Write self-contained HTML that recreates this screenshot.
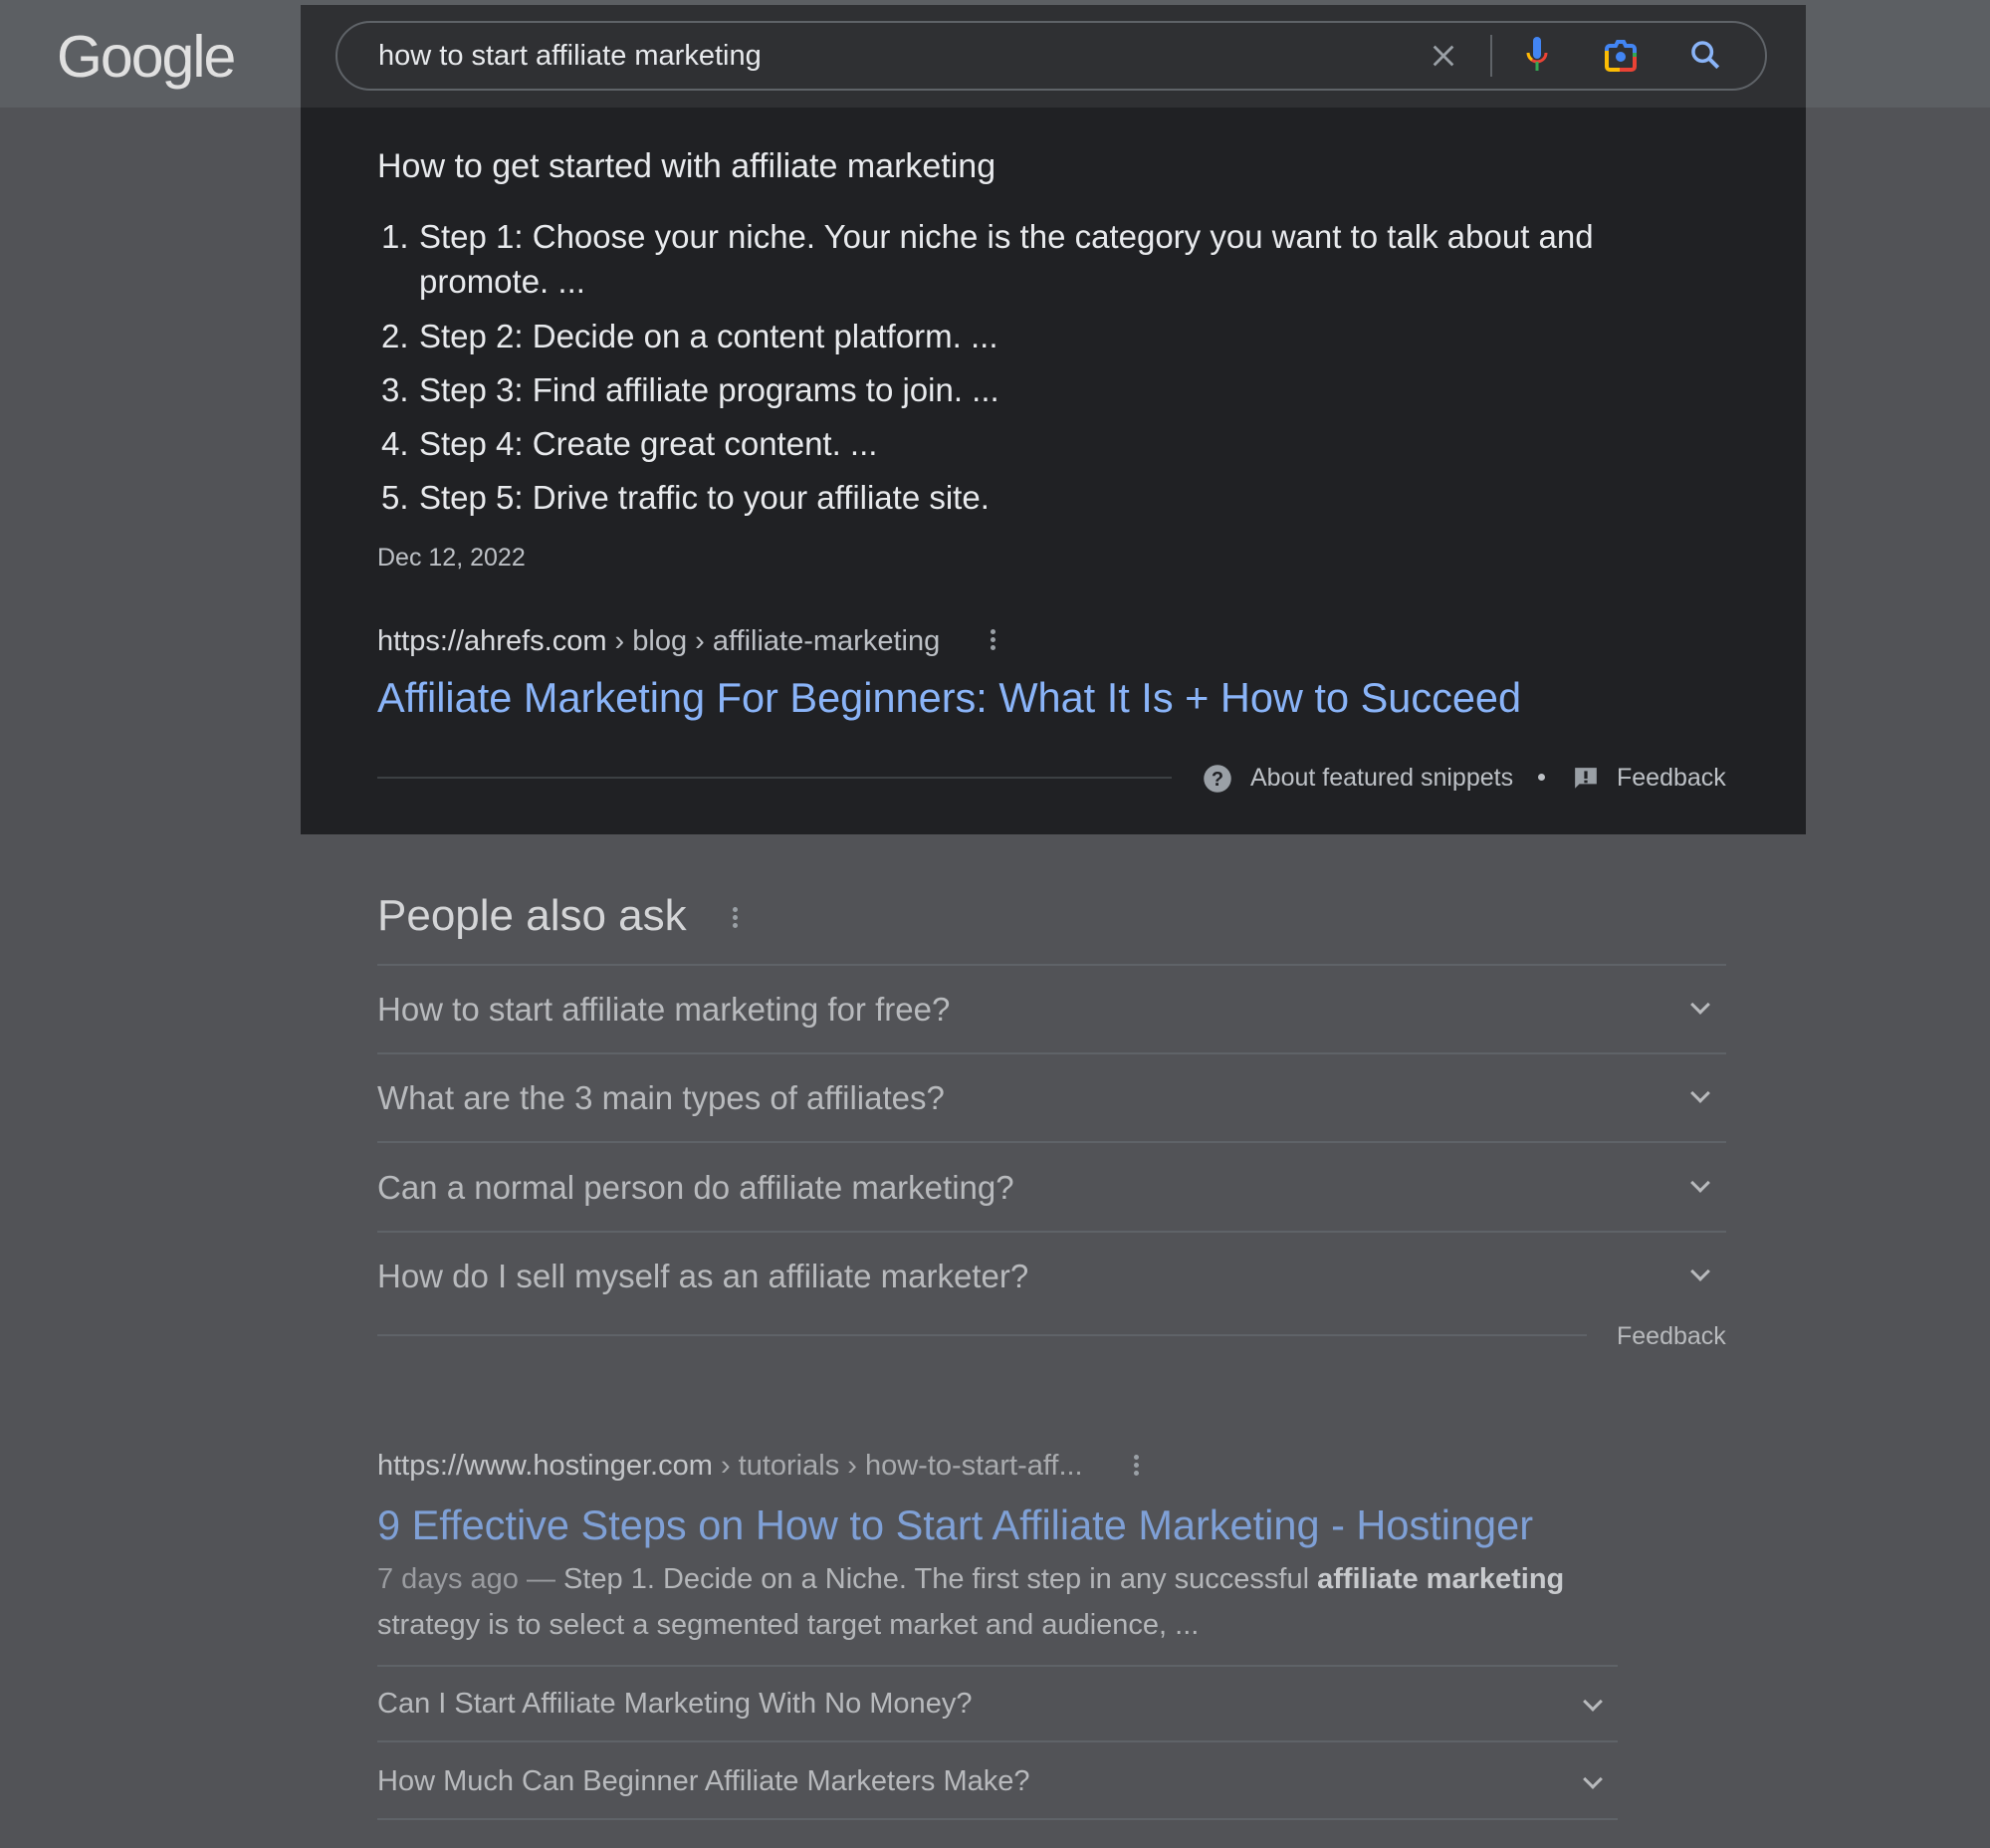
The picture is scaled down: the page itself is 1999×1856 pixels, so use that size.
<!DOCTYPE html>
<html><head><meta charset="utf-8"><style>
*{margin:0;padding:0;box-sizing:border-box}
body{width:1999px;height:1856px;background:#525357;font-family:"Liberation Sans",Arial,sans-serif;position:relative;overflow:hidden}
.a{position:absolute;white-space:nowrap}
.hdr{position:absolute;left:0;top:0;width:1999px;height:108px;background:#5c5f63}
.panel{position:absolute;left:302px;top:5px;width:1512px;height:833px;background:#202124}
.ptop{position:absolute;left:302px;top:5px;width:1512px;height:103px;background:#2f3033}
.sb{position:absolute;left:337px;top:21px;width:1438px;height:70px;border:2px solid #5f6368;border-radius:35px;background:#2f3033}
.l{position:absolute;height:2px;background:#5f6368}
.q{color:#b8babd;font-size:33px}
.s{font-size:33px;color:#e8eaed}
.chev{position:absolute;width:14px;height:14px;border-right:3px solid #b8babd;border-bottom:3px solid #b8babd;transform:rotate(45deg)}
.dots{position:absolute;width:5px}
.dots i{display:block;width:5px;height:5px;border-radius:50%;background:#9aa0a6;margin-bottom:3px}
</style></head><body>
<div class="hdr"></div>
<div class="panel"></div>
<div class="ptop"></div>
<div class="a" style="left:57px;top:23px;font-size:59px;color:#e0e0e0;letter-spacing:-2px">Google</div>
<div class="sb"></div>
<div class="a" style="left:380px;top:40px;font-size:29px;color:#e8eaed">how to start affiliate marketing</div>
<svg class="a" style="left:1436px;top:42px" width="28" height="28" viewBox="0 0 24 24"><path d="M4 4L20 20M20 4L4 20" stroke="#9aa0a6" stroke-width="2.4"/></svg>
<div class="a" style="left:1497px;top:35px;width:2px;height:42px;background:#5f6368"></div>
<svg class="a" style="left:1530px;top:36px" width="28" height="40" viewBox="0 0 28 40"><rect x="10" y="1" width="8" height="22" rx="4" fill="#4285f4"/><path d="M5 17a9 9 0 0 0 18 0" stroke="#ea4335" stroke-width="3" fill="none"/><path d="M5 17a9 9 0 0 0 4 7" stroke="#fbbc04" stroke-width="3" fill="none"/><rect x="12.5" y="26" width="3" height="9" fill="#34a853"/></svg>
<svg class="a" style="left:1610px;top:39px" width="36" height="34" viewBox="0 0 36 34"><path d="M4 12V28a3 3 0 0 0 3 3h10" stroke="#fbbc04" stroke-width="4" fill="none"/><path d="M17 31h12a3 3 0 0 0 3-3V14" stroke="#ea4335" stroke-width="4" fill="none"/><path d="M32 14V10a3 3 0 0 0-3-3H23l-2-4h-6l-2 4H7a3 3 0 0 0-3 3v2" stroke="#4285f4" stroke-width="4" fill="none"/><path d="M32 14V18" stroke="#34a853" stroke-width="4"/><circle cx="18" cy="18" r="5" fill="#4285f4"/></svg>
<svg class="a" style="left:1696px;top:38px" width="34" height="34" viewBox="0 0 24 24"><circle cx="10" cy="10" r="6.5" stroke="#8ab4f8" stroke-width="2.5" fill="none"/><path d="M15 15L21 21" stroke="#8ab4f8" stroke-width="2.8"/></svg>

<div class="a" style="left:379px;top:148px;font-size:34px;color:#e8eaed">How to get started with affiliate marketing</div>
<div class="a s" style="left:383px;top:219px">1.</div>
<div class="a s" style="left:421px;top:219px">Step 1: Choose your niche. Your niche is the category you want to talk about and</div>
<div class="a s" style="left:421px;top:264px">promote. ...</div>
<div class="a s" style="left:383px;top:319px">2.</div>
<div class="a s" style="left:421px;top:319px">Step 2: Decide on a content platform. ...</div>
<div class="a s" style="left:383px;top:373px">3.</div>
<div class="a s" style="left:421px;top:373px">Step 3: Find affiliate programs to join. ...</div>
<div class="a s" style="left:383px;top:427px">4.</div>
<div class="a s" style="left:421px;top:427px">Step 4: Create great content. ...</div>
<div class="a s" style="left:383px;top:481px">5.</div>
<div class="a s" style="left:421px;top:481px">Step 5: Drive traffic to your affiliate site.</div>
<div class="a" style="left:379px;top:546px;font-size:25px;color:#bdc1c6">Dec 12, 2022</div>
<div class="a" style="left:379px;top:628px;font-size:29px;color:#dadce0">https://ahrefs.com <span style="color:#bdc1c6">› blog › affiliate-marketing</span></div>
<div class="dots" style="left:995px;top:632px"><i></i><i></i><i></i></div>
<div class="a" style="left:379px;top:677px;font-size:41.5px;color:#8ab4f8">Affiliate Marketing For Beginners: What It Is + How to Succeed</div>
<div class="l" style="left:379px;top:780px;width:798px;background:#3c4043"></div>
<svg class="a" style="left:1208px;top:767px" width="30" height="30" viewBox="0 0 24 24"><circle cx="12" cy="12" r="11" fill="#9aa0a6"/><text x="12" y="17.5" font-size="16" font-weight="bold" text-anchor="middle" fill="#202124" font-family="Liberation Sans">?</text></svg>
<div class="a" style="left:1256px;top:767px;font-size:25px;color:#bdc1c6">About featured snippets</div>
<div class="a" style="left:1545px;top:777px;width:7px;height:7px;border-radius:50%;background:#bdc1c6"></div>
<svg class="a" style="left:1580px;top:769px" width="26" height="26" viewBox="0 0 24 24"><path d="M2 2h20v15H6l-4 4z" fill="#9aa0a6"/><rect x="10.5" y="5" width="3" height="7" fill="#202124"/><rect x="10.5" y="13.5" width="3" height="2.5" fill="#202124"/></svg>
<div class="a" style="left:1624px;top:767px;font-size:25px;color:#bdc1c6">Feedback</div>

<div class="a" style="left:379px;top:895px;font-size:44px;color:#d4d5d7">People also ask</div>
<div class="dots" style="left:736px;top:911px"><i></i><i></i><i></i></div>
<div class="l" style="left:379px;top:968px;width:1355px"></div>
<div class="a q" style="left:379px;top:995px">How to start affiliate marketing for free?</div>
<div class="chev" style="left:1701px;top:1002px"></div>
<div class="l" style="left:379px;top:1057px;width:1355px"></div>
<div class="a q" style="left:379px;top:1084px">What are the 3 main types of affiliates?</div>
<div class="chev" style="left:1701px;top:1091px"></div>
<div class="l" style="left:379px;top:1146px;width:1355px"></div>
<div class="a q" style="left:379px;top:1174px">Can a normal person do affiliate marketing?</div>
<div class="chev" style="left:1701px;top:1181px"></div>
<div class="l" style="left:379px;top:1236px;width:1355px"></div>
<div class="a q" style="left:379px;top:1263px">How do I sell myself as an affiliate marketer?</div>
<div class="chev" style="left:1701px;top:1270px"></div>
<div class="l" style="left:379px;top:1340px;width:1215px"></div>
<div class="a" style="left:1624px;top:1328px;font-size:25px;color:#b8babd">Feedback</div>

<div class="a" style="left:379px;top:1456px;font-size:29px;color:#c4c6c9">https://www.hostinger.com <span style="color:#a9abae">› tutorials › how-to-start-aff...</span></div>
<div class="dots" style="left:1139px;top:1461px"><i></i><i></i><i></i></div>
<div class="a" style="left:379px;top:1508px;font-size:41.5px;color:#7fa0d6">9 Effective Steps on How to Start Affiliate Marketing - Hostinger</div>
<div class="a" style="left:379px;top:1563px;font-size:29px;color:#b4b6b9;line-height:46px"><span style="color:#9a9ca0">7 days ago — </span>Step 1. Decide on a Niche. The first step in any successful <b style="color:#c8cacd">affiliate marketing</b><br>strategy is to select a segmented target market and audience, ...</div>
<div class="l" style="left:379px;top:1672px;width:1246px"></div>
<div class="a" style="left:379px;top:1695px;font-size:29px;color:#b8babd">Can I Start Affiliate Marketing With No Money?</div>
<div class="chev" style="left:1593px;top:1702px"></div>
<div class="l" style="left:379px;top:1748px;width:1246px"></div>
<div class="a" style="left:379px;top:1773px;font-size:29px;color:#b8babd">How Much Can Beginner Affiliate Marketers Make?</div>
<div class="chev" style="left:1593px;top:1780px"></div>
<div class="l" style="left:379px;top:1826px;width:1246px"></div>
</body></html>
